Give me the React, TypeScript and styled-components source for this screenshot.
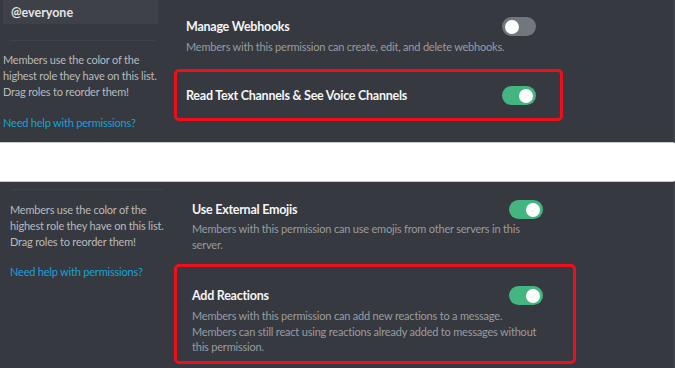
import React from 'react';
import styled, { createGlobalStyle } from 'styled-components';

const GlobalStyle = createGlobalStyle`
  html, body {
    margin: 0;
    padding: 0;
    background: #ffffff;
    font-family: Lato, "Open Sans", sans-serif;
  }
`;

interface Perm {
  title: string;
  desc?: string[];
  on: boolean;
}

// one cropped screenshot of the role settings page
const Shot = styled.section<{ $height: number; $top?: boolean; $bottom?: boolean }>`
  display: flex;
  height: ${(p) => p.$height}px;
  background: #36393f;
  overflow: hidden;
  border-top: ${(p) => (p.$top ? '1px solid #c9cacd' : 'none')};
  border-bottom: ${(p) => (p.$bottom ? '1px solid #c9cacd' : 'none')};
  border-right: 2px solid #3e4147;
`;

const Gap = styled.div`
  height: 38px;
  background: #ffffff;
`;

const Sidebar = styled.aside<{ $padLeft: number; $width: number }>`
  width: ${(p) => p.$width}px;
  flex-shrink: 0;
  box-sizing: border-box;
  padding-left: ${(p) => p.$padLeft}px;
  padding-right: 2px;
  display: flex;
  flex-direction: column;
`;

const RoleItem = styled.div`
  height: 24px;
  background: #3e4147;
  padding-left: 8px;
  font-size: 12.5px;
  font-weight: 700;
  line-height: 26px;
  color: #e3e4e6;
`;

const Divider = styled.div<{ $top: number; $bottom: number; $left: number }>`
  height: 1px;
  margin: ${(p) => p.$top}px 3px ${(p) => p.$bottom}px ${(p) => p.$left}px;
  background: #3f4248;
`;

const Hint = styled.p`
  margin: 0;
  font-size: 11px;
  letter-spacing: -0.2px;
  line-height: 16px;
  color: #b8babd;
`;

const HelpLink = styled.a<{ $top: number }>`
  margin-top: ${(p) => p.$top}px;
  font-size: 11px;
  letter-spacing: -0.2px;
  line-height: 16px;
  color: #1aa0d8;
  text-decoration: none;
  white-space: nowrap;
`;

const Main = styled.div<{ $padTop: number; $padLeft: number }>`
  flex: 1;
  padding: ${(p) => p.$padTop}px 0 0 ${(p) => p.$padLeft}px;
  display: flex;
  flex-direction: column;
`;

const PermRow = styled.div<{ $boxed?: boolean; $pad: string; $width: number; $mt?: number }>`
  width: ${(p) => p.$width}px;
  box-sizing: border-box;
  margin-top: ${(p) => p.$mt ?? 0}px;
  padding: ${(p) => p.$pad};
  border: 3px solid ${(p) => (p.$boxed ? '#ee0f1a' : 'transparent')};
  border-radius: 5px;
`;

const RowHead = styled.div`
  display: flex;
  align-items: center;
  justify-content: space-between;
  height: 18px;
`;

const PermTitle = styled.div`
  font-size: 12.5px;
  font-weight: 700;
  letter-spacing: -0.25px;
  color: #f4f5f6;
`;

const PermDesc = styled.div<{ $lh: number; $mt: number }>`
  margin-top: ${(p) => p.$mt}px;
  font-size: 11px;
  letter-spacing: -0.2px;
  line-height: ${(p) => p.$lh}px;
  color: #999ca0;
`;

const Toggle = styled.span<{ $on: boolean }>`
  position: relative;
  width: 34px;
  height: 19px;
  border-radius: 10px;
  background: ${(p) => (p.$on ? '#43b581' : '#72767d')};
  flex-shrink: 0;
`;

const Knob = styled.span<{ $on: boolean }>`
  position: absolute;
  top: 3px;
  left: ${(p) => (p.$on ? '17px' : '3px')};
  width: 14px;
  height: 14px;
  border-radius: 50%;
  background: #ffffff;
  display: flex;
  align-items: center;
  justify-content: center;
`;

const Switch: React.FC<{ on: boolean }> = ({ on }) => (
  <Toggle $on={on}>
    <Knob $on={on}>
      {on && (
        <svg width="8" height="8" viewBox="0 0 8 8">
          <path d="M1.5 4.2 L3.3 6 L6.5 2.2" fill="none" stroke="#eef3f0" strokeWidth="1.1" />
        </svg>
      )}
    </Knob>
  </Toggle>
);

const PermItem: React.FC<{
  perm: Perm;
  boxed?: boolean;
  pad: string;
  width: number;
  mt?: number;
  lh?: number;
  descTop?: number;
}> = ({ perm, boxed, pad, width, mt, lh = 16, descTop = 4 }) => (
  <PermRow $boxed={boxed} $pad={pad} $width={width} $mt={mt}>
    <RowHead>
      <PermTitle>{perm.title}</PermTitle>
      <Switch on={perm.on} />
    </RowHead>
    {perm.desc && (
      <PermDesc $lh={lh} $mt={descTop}>
        {perm.desc.map((line) => (
          <div key={line}>{line}</div>
        ))}
      </PermDesc>
    )}
  </PermRow>
);

const webhooks: Perm = {
  title: 'Manage Webhooks',
  desc: ['Members with this permission can create, edit, and delete webhooks.'],
  on: false,
};

const readChannels: Perm = { title: 'Read Text Channels & See Voice Channels', on: true };

const emojis: Perm = {
  title: 'Use External Emojis',
  desc: ['Members with this permission can use emojis from other servers in this server.'],
  on: true,
};

const reactions: Perm = {
  title: 'Add Reactions',
  desc: [
    'Members with this permission can add new reactions to a message.',
    'Members can still react using reactions already added to messages without this permission.',
  ],
  on: true,
};

const Sidehint: React.FC<{ linkTop: number }> = ({ linkTop }) => (
  <>
    <Hint>
      Members use the color of the highest role they have on this list.
      <br />
      Drag roles to reorder them!
    </Hint>
    <HelpLink href="#" $top={linkTop}>Need help with permissions?</HelpLink>
  </>
);

const App: React.FC = () => {
  return (
    <>
      <GlobalStyle />
      <Shot $height={142} $bottom>
        <Sidebar $padLeft={3} $width={160}>
          <RoleItem>@everyone</RoleItem>
          <Divider $top={16} $bottom={11} $left={7} />
          <Sidehint linkTop={15} />
        </Sidebar>
        <Main $padTop={8} $padLeft={14}>
          <PermItem perm={webhooks} pad="6px 24px 6px 9px" width={389} />
          <PermItem perm={readChannels} boxed pad="14px 24px 14px 9px" width={389} mt={5} />
        </Main>
      </Shot>
      <Gap />
      <Shot $height={187} $top>
        <Sidebar $padLeft={10} $width={168}>
          <Divider $top={7} $bottom={12} $left={2} />
          <Sidehint linkTop={14} />
        </Sidebar>
        <Main $padTop={6} $padLeft={6}>
          <PermItem perm={emojis} pad="9px 30px 8px 15px" width={402} descTop={3} />
          <PermItem perm={reactions} boxed pad="19px 30px 6px 15px" width={402} lh={15.5} />
        </Main>
      </Shot>
    </>
  );
};

export default App;
